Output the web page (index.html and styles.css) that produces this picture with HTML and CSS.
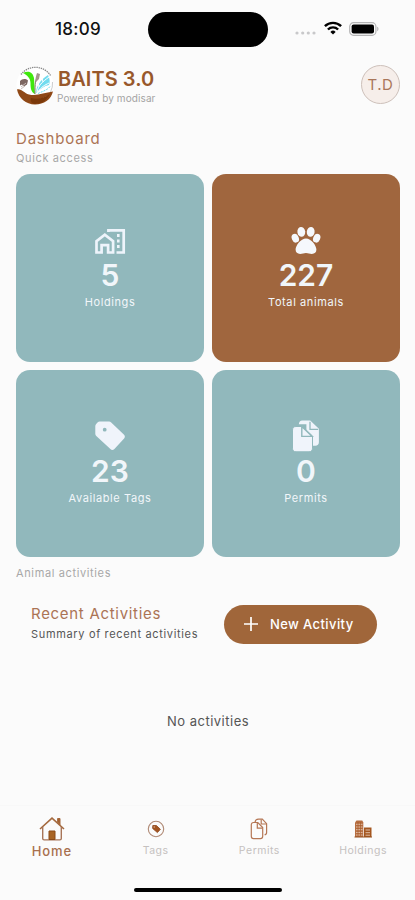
FILE: index.html
```html
<!DOCTYPE html>
<html lang="en">
<head>
    <meta charset="UTF-8">
    <meta name="viewport" content="width=device-width, initial-scale=1.0">
    <title>BAITS 3.0</title>
    <link rel="stylesheet" href="styles.css">
</head>
<body>
    <div class="app">
        <div class="status-bar">
            <span class="time">18:09</span>
            <div class="island"></div>
            <div class="status-icons">
                <svg class="signal" width="21" height="4" viewBox="0 0 21 4" fill="#c8c8ca">
                    <circle cx="2" cy="2" r="1.6"/><circle cx="7.7" cy="2" r="1.6"/><circle cx="13.3" cy="2" r="1.6"/><circle cx="19" cy="2" r="1.6"/>
                </svg>
                <svg class="wifi" width="18" height="14" viewBox="0 0 18 14" fill="none" stroke="#000" stroke-width="2.4">
                    <path d="M.9 5.2a11.6 11.6 0 0 1 16.2 0"/>
                    <path d="M3.9 8.5a7.3 7.3 0 0 1 10.2 0"/>
                    <path d="M9 13.4 6.4 10.9a3.7 3.7 0 0 1 5.2 0z" fill="#000" stroke="none"/>
                </svg>
                <svg class="battery" width="31" height="14" viewBox="0 0 31 14">
                    <rect x=".7" y=".7" width="26.2" height="12.6" rx="3.8" fill="none" stroke="#b4b4b5" stroke-width="1.2"/>
                    <rect x="2.6" y="2.4" width="22.4" height="9.2" rx="2" fill="#000"/>
                    <path d="M28.2 4.8c1.7.6 1.7 3.8 0 4.4z" fill="#b4b4b5"/>
                </svg>
            </div>
        </div>

        <header class="header">
            <svg class="logo" width="38" height="40" viewBox="0 0 38 40">
                <circle cx="19" cy="20" r="18.6" fill="#fff"/>
                <path d="M5 9.5A18 18 0 0 1 34.5 10.5" fill="none" stroke="#888" stroke-width="1.3" stroke-dasharray="1.4 .8"/>
                <path d="M36.5 17a18 18 0 0 1-2 10" fill="none" stroke="#ccc" stroke-width="1"/>
                <path d="M4 16c2-2 5-3 8-.5l-1 4-3 2-2-2-2 1z" fill="#7d6660"/>
                <path d="M5 22l5-4M5 24l4-3" stroke="#c9bcb8" stroke-width="1"/>
                <path d="M7 8c6-3 10-.5 11 5l1 16c-4-2-4.500-6-4.500-11S11 10 7 8z" fill="#3fe80c"/>
                <path d="M19 29c0-10 0-15 4-20" fill="none" stroke="#88786e" stroke-width="1"/>
                <path d="M21 8l3 1-1 5-3 3c-1-3 0-6 1-9z" fill="#a3958c"/>
                <path d="M20 28c0-6 4-13 12-18 2 4 2 7 1 10-5 1-9 4-13 8z" fill="#72dcef"/>
                <path d="M21 27c1-6 5-10 12-15M22 27c3-5 7-7 11-9M23 22l-1-5M27 17l-1-4" fill="none" stroke="#fff" stroke-width="1"/>
                <path d="M22 28.500c4-2 9-3 12-7" fill="none" stroke="#6fdff0" stroke-width="1" stroke-dasharray="2 1"/>
                <path d="M1 24.500c5-1 7 4 12 5 8 2 15-2 24-3-2 8-9 13-18 13S2.500 33 1 24.500z" fill="#8f4816"/>
                <path d="M17 34c5 1 9 0 14-3-3 5-7 8-12 7-2 0-3-2-2-4z" fill="#f3e9e3"/>
                <path d="M15 33c6 2 13 0 19-4-3 6-8 10-15 10-3 0-5-3-4-6z" fill="#7b390a"/>
            </svg>
            <div class="brand">
                <h1 class="brand-name">BAITS 3.0</h1>
                <p class="brand-by">Powered by modisar</p>
            </div>
            <div class="avatar">T.D</div>
        </header>

        <main class="content">
            <h2 class="section-title">Dashboard</h2>
            <p class="section-sub">Quick access</p>

            <div class="cards">
                <div class="card">
                    <svg class="card-icon" width="34" height="34" viewBox="0 0 34 34" fill="none" stroke="#eef4fb" stroke-width="2.7">
                        <path d="M3.500 29.500V18.200l8.300-6.500 8.300 6.500v11.300h-5v-7.300H8.600v7.300z"/>
                        <path d="M15.400 9V7.300h15.300v22.200h-7.200"/>
                        <path d="M25.300 11v3M25.300 16.500v3M25.300 22v3" stroke-width="2.6"/>
                    </svg>
                    <span class="card-value">5</span>
                    <span class="card-label">Holdings</span>
                </div>
                <div class="card card-brown">
                    <svg class="card-icon" width="34" height="34" viewBox="0 0 34 34" fill="#f5f8fc">
                        <ellipse cx="6.300" cy="15.200" rx="3.500" ry="4.500" transform="rotate(-22 6.300 15.200)"/>
                        <ellipse cx="12.300" cy="8.900" rx="3.900" ry="4.900" transform="rotate(-8 12.300 8.900)"/>
                        <ellipse cx="21.700" cy="8.900" rx="3.900" ry="4.900" transform="rotate(8 21.700 8.900)"/>
                        <ellipse cx="27.700" cy="15.200" rx="3.500" ry="4.500" transform="rotate(22 27.700 15.200)"/>
                        <path d="M17 15.400c5.200 0 10.400 6.900 10.400 11.200 0 2.900-1.800 4.300-4.500 4.300-2.400 0-3.500-.8-5.900-.8s-3.500.8-5.900.8c-2.700 0-4.500-1.400-4.500-4.300 0-4.300 5.200-11.200 10.400-11.200z"/>
                    </svg>
                    <span class="card-value">227</span>
                    <span class="card-label">Total animals</span>
                </div>
                <div class="card">
                    <svg class="card-icon" width="34" height="34" viewBox="0 0 34 34">
                        <path fill="#f0f4fb" fill-rule="evenodd" d="M6.800 2.600h9.200c.9 0 1.600.3 2.200.8L30.800 15.600c1.400 1.300 1.400 2.700.3 3.800l-9.700 10.500c-1.300 1.300-2.800 1.300-4 .1L3.300 17a3 3 0 0 1-1-2.200V7.300c0-1 .3-1.600.9-2.200l1.300-1.500c.7-.7 1.400-1 2.300-1zM11.700 8.800a1.900 1.900 0 1 0 0 3.800 1.900 1.900 0 0 0 0-3.800z"/>
                    </svg>
                    <span class="card-value">23</span>
                    <span class="card-label">Available Tags</span>
                </div>
                <div class="card">
                    <svg class="card-icon" width="34" height="34" viewBox="0 0 34 34" fill="#f0f4fb">
                        <path d="M13.200 1.500h8l8.700 8.200v13.600c0 2-1.400 3.500-3.500 3.500h-9V5.300H9.800c.2-2.400 1.400-3.800 3.400-3.800z"/>
                        <path d="M21 2.700v7.600h8.200" fill="none" stroke="#91b8bc" stroke-width="1.300"/>
                        <path d="M7 7.500h6.500l10 9.700v12c0 2.200-1.300 3.600-3.500 3.600H7c-2.300 0-3.500-1.400-3.500-3.600V11.100c0-2.200 1.200-3.600 3.500-3.600z" stroke="#91b8bc" stroke-width="1"/>
                        <path d="M12.800 8v9.400h10.400L12.800 7.500" fill="none" stroke="#91b8bc" stroke-width="1.400"/>
                    </svg>
                    <span class="card-value">0</span>
                    <span class="card-label">Permits</span>
                </div>
            </div>

            <p class="section-sub animal">Animal activities</p>

            <div class="recent">
                <div class="recent-text">
                    <h2 class="recent-title">Recent Activities</h2>
                    <p class="recent-sub">Summary of recent activities</p>
                </div>
                <button class="new-activity">
                    <svg width="14" height="14" viewBox="0 0 14 14" stroke="#fff" stroke-width="1.7"><path d="M7 0v14M0 7h14"/></svg>
                    <span>New Activity</span>
                </button>
            </div>

            <p class="empty">No activities</p>
        </main>

        <nav class="tab-bar">
            <a class="tab active">
                <svg width="26" height="26" viewBox="0 0 26 26" fill="none" stroke="#a4693e" stroke-width="1.4">
                    <path d="M1 13 13 2.200 25 13" stroke-width="1.6"/>
                    <path d="M3.700 11v11.500c0 .9.500 1.400 1.400 1.400h15.800c.9 0 1.400-.5 1.400-1.400V11" stroke="#a87558"/>
                    <path d="M18.600 6V2.500h2.400v6.200z" fill="#a4612f" stroke-width="1"/>
                    <path d="M10 15h6v8.500h-6z" fill="#a86424" stroke="#8b4a17" stroke-width="1"/>
                </svg>
                <span>Home</span>
            </a>
            <a class="tab">
                <svg width="26" height="26" viewBox="0 0 26 26">
                    <circle cx="13" cy="13" r="7.700" fill="none" stroke="#b08a76" stroke-width="1.1"/>
                    <path d="M9.800 9.500h3.600l4 3.800-3 3.300-4.800-4.200z" fill="#a35420" stroke="#8e4519" stroke-width=".8" stroke-linejoin="round"/>
                    <circle cx="11.200" cy="11" r=".7" fill="#dcb79d"/>
                </svg>
                <span>Tags</span>
            </a>
            <a class="tab">
                <svg width="26" height="26" viewBox="0 0 26 26" fill="none" stroke="#b57755" stroke-width="1.2">
                    <path d="M9 6.200C9.300 4 10.500 3.200 12.500 3.200h3.800l4.300 4.500v8.700c0 1.500-.8 2.200-2 2.200"/>
                    <path d="M15.200 3.500V8h5"/>
                    <path d="M7.500 6.500h4.300l4.900 5v8.800c0 1.500-.8 2.300-2.200 2.300h-7c-1.500 0-2.200-.8-2.200-2.300V8.700c0-1.400.8-2.200 2.200-2.200z"/>
                    <path d="M11.300 6.800v5.400h5"/>
                </svg>
                <span>Permits</span>
            </a>
            <a class="tab">
                <svg width="26" height="26" viewBox="0 0 26 26">
                    <path d="M5 6.500 6.500 4.500h5.800l1 2V21H5z" fill="#b66d40"/>
                    <path d="M14 11.500h7.500V21H14z" fill="#a4561f"/>
                    <path d="M6 8.300h6.500M6 11h6.500M6 13.700h6.500M6 16.400h6.500M6 19h6.500M15.500 14H20M15.500 16.700H20M15.500 19.200H20" stroke="#e6c9b5" stroke-width=".9"/>
                    <path d="M8 6v14M10.500 6v14" stroke="#a75d2c" stroke-width=".7"/>
                    <path d="M4.500 21H22" stroke="#96501f"/>
                </svg>
                <span>Holdings</span>
            </a>
        </nav>
        <div class="home-indicator"></div>
    </div>
</body>
</html>
```

FILE: styles.css
```css
* {
    box-sizing: border-box;
}
body {
    margin: 0;
    background: #fbfbfb;
    font-family: Inter, "Liberation Sans", sans-serif;
    color: #4b4b4b;
}
h1, h2, p {
    margin: 0;
    font-weight: 400;
}
.app {
    width: 415px;
    height: 900px;
    display: flex;
    flex-direction: column;
    overflow: hidden;
}
.status-bar {
    height: 58px;
    display: grid;
    grid-template-columns: 148px 120px 1fr;
    align-items: center;
    flex: none;
}
.time {
    padding-left: 55px;
    font-size: 17px;
    font-weight: 500;
    letter-spacing: 0.3px;
    color: #111;
}
.island {
    height: 35px;
    border-radius: 18px;
    background: #000;
}
.status-icons {
    display: flex;
    align-items: center;
    padding-left: 27px;
}
.signal {
    margin-top: 8px;
}
.wifi {
    margin-left: 8px;
    margin-top: -2px;
}
.battery {
    margin-left: 7px;
}
.header {
    display: flex;
    align-items: center;
    height: 39px;
    margin: 7px 15px 0 16px;
    flex: none;
}
.brand {
    margin-left: 3px;
    padding-top: 2px;
    flex: 1;
}
.brand-name {
    font-size: 20px;
    line-height: 24px;
    font-weight: 600;
    letter-spacing: 0.05px;
    color: #98582b;
    padding-left: 1px;
}
.brand-by {
    font-size: 10px;
    line-height: 14px;
    letter-spacing: 0.1px;
    color: #a3a3a3;
}
.avatar {
    width: 39px;
    height: 39px;
    border: 1px solid #cdc0ba;
    border-radius: 50%;
    background: #f6eeea;
    color: #a9765a;
    font-size: 15px;
    letter-spacing: 0.5px;
    display: flex;
    align-items: center;
    justify-content: center;
}
.content {
    flex: 1;
    padding: 25px 15px 0 16px;
}
.section-title {
    font-size: 15px;
    line-height: 20px;
    letter-spacing: 0.8px;
    color: #ab7455;
}
.section-sub {
    font-size: 11px;
    line-height: 18px;
    letter-spacing: 0.63px;
    color: #a8a8a8;
}
.cards {
    display: grid;
    grid-template-columns: 188px 188px;
    grid-auto-rows: 187.5px;
    gap: 8px;
    margin-top: 7px;
}
.card {
    display: flex;
    flex-direction: column;
    align-items: center;
    padding-top: 49px;
    border-radius: 14px;
    background: #91b8bc;
    color: #f1f6fa;
}
.card-brown {
    background: #a0663e;
}
.card-value {
    font-size: 30px;
    line-height: 36px;
    font-weight: 600;
}
.card-label {
    font-size: 11px;
    line-height: 18px;
    letter-spacing: 0.6px;
}
.animal {
    margin-top: 7px;
}
.recent {
    display: flex;
    align-items: center;
    justify-content: space-between;
    margin: 22px 23px 0 15px;
}
.recent-title {
    font-size: 15px;
    line-height: 20px;
    letter-spacing: 0.7px;
    color: #ab7455;
}
.recent-sub {
    font-size: 11px;
    line-height: 20px;
    letter-spacing: 0.66px;
    color: #555;
}
.new-activity {
    display: flex;
    align-items: center;
    gap: 12px;
    width: 153px;
    height: 39px;
    padding: 0 0 0 20px;
    border: none;
    border-radius: 20px;
    background: #a0663a;
    color: #fff;
    font: 500 13px Inter, "Liberation Sans", sans-serif;
    letter-spacing: 0.4px;
    white-space: nowrap;
}
.empty {
    margin-top: 68px;
    font-size: 13px;
    line-height: 18px;
    letter-spacing: 0.5px;
    text-align: center;
    color: #555;
}
.tab-bar {
    display: grid;
    grid-template-columns: repeat(4, 1fr);
    height: 83px;
    padding-top: 10px;
    border-top: 1px solid #f8f8f8;
    flex: none;
}
.tab {
    display: flex;
    flex-direction: column;
    align-items: center;
    font-size: 10.5px;
    line-height: 18px;
    letter-spacing: 0.5px;
    color: #c5c1bf;
}
.active {
    font-size: 13px;
    font-weight: 500;
    letter-spacing: 0.9px;
    color: #a8704e;
}
.home-indicator {
    width: 148px;
    height: 4px;
    margin: 0 auto 8px 134px;
    border-radius: 2px;
    background: #000;
    flex: none;
}
```
